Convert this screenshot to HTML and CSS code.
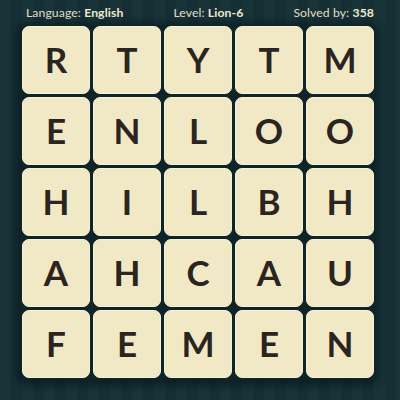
FILE: index.html
```html
<!DOCTYPE html>
<html>
<head>
<meta charset="utf-8">
<link rel="stylesheet" href="styles.css">
</head>
<body>
<div class="page">
  <div class="header">
    <span>Language: <b>English</b></span>
    <span>Level: <b>Lion-6</b></span>
    <span>Solved by: <b>358</b></span>
  </div>
  <div class="board">
    <div class="tile">R</div><div class="tile">T</div><div class="tile">Y</div><div class="tile">T</div><div class="tile">M</div>
    <div class="tile">E</div><div class="tile">N</div><div class="tile">L</div><div class="tile">O</div><div class="tile">O</div>
    <div class="tile">H</div><div class="tile">I</div><div class="tile">L</div><div class="tile">B</div><div class="tile">H</div>
    <div class="tile">A</div><div class="tile">H</div><div class="tile">C</div><div class="tile">A</div><div class="tile">U</div>
    <div class="tile">F</div><div class="tile">E</div><div class="tile">M</div><div class="tile">E</div><div class="tile">N</div>
  </div>
</div>
</body>
</html>
```

FILE: styles.css
```css
html, body {
  margin: 0;
  padding: 0;
  width: 400px;
  height: 400px;
  overflow: hidden;
}
body {
  background-color: #173238;
  background-image: repeating-linear-gradient(90deg, #183439 0px, #183439 11px, #152f35 11px, #152f35 22px);
  font-family: Lato, "Open Sans", sans-serif;
}
.page {
  display: flex;
  flex-direction: column;
  align-items: flex-start;
}
.header {
  box-sizing: border-box;
  width: 400px;
  height: 25px;
  padding: 0 26px 0 26px;
  display: flex;
  justify-content: space-between;
  align-items: center;
  color: #e6dfc3;
  font-size: 12.2px;
  letter-spacing: 0.1px;
}
.header b {
  font-weight: 700;
  color: #f1ead0;
}
.board {
  margin-left: 21px;
  display: grid;
  grid-template-columns: repeat(5, 68px);
  grid-auto-rows: 68px;
  gap: 3px;
  padding: 1px;
  background: #0f2429;
  border-radius: 8px;
  box-shadow: 0 2px 6px 5px rgba(8, 22, 26, 0.55);
}
.tile {
  box-sizing: border-box;
  background: #f1e9c5;
  border: 1px solid #f7f1d6;
  border-radius: 7px;
  display: flex;
  align-items: center;
  justify-content: center;
  color: #2b241f;
  font-family: Lato, sans-serif;
  font-weight: 700;
  font-size: 35px;
  padding-bottom: 2px;
}
```
